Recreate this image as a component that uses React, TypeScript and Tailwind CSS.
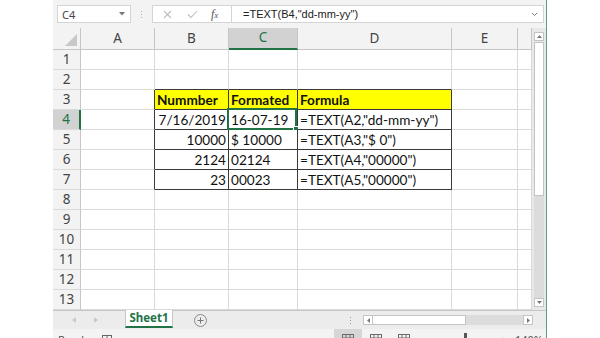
import React from 'react';

type Cell = { t?: string; align?: 'l' | 'r'; bold?: boolean; yellow?: boolean };

const COLS = [
  { key: 'A', w: 'w-[74px]' },
  { key: 'B', w: 'w-[74px]' },
  { key: 'C', w: 'w-[69px]' },
  { key: 'D', w: 'w-[154px]' },
  { key: 'E', w: 'w-[66px]' },
  { key: 'F', w: 'w-[14px]' },
];

const DATA: Record<number, Record<string, Cell>> = {
  3: {
    B: { t: 'Nummber', bold: true, yellow: true },
    C: { t: 'Formated', bold: true, yellow: true },
    D: { t: 'Formula', bold: true, yellow: true },
  },
  4: { B: { t: '7/16/2019', align: 'r' }, C: { t: '16-07-19' }, D: { t: '=TEXT(A2,"dd-mm-yy")' } },
  5: { B: { t: '10000', align: 'r' }, C: { t: '$ 10000' }, D: { t: '=TEXT(A3,"$ 0")' } },
  6: { B: { t: '2124', align: 'r' }, C: { t: '02124' }, D: { t: '=TEXT(A4,"00000")' } },
  7: { B: { t: '23', align: 'r' }, C: { t: '00023' }, D: { t: '=TEXT(A5,"00000")' } },
};

const inTable = (r: number, c: string) => r >= 3 && r <= 7 && (c === 'B' || c === 'C' || c === 'D');

function GridCell({ r, c, w }: { r: number; c: string; w: string }) {
  const cell = DATA[r]?.[c];
  const rightBlack = inTable(r, c) || (c === 'A' && r >= 3 && r <= 7);
  const bottomBlack = inTable(r, c) || (r === 2 && (c === 'B' || c === 'C' || c === 'D'));
  const selected = r === 4 && c === 'C';
  return (
    <div
      className={`${w} relative h-[20px] shrink-0 border-r border-b ${
        rightBlack ? 'border-r-[#3a3a3a]' : 'border-r-[#dadada]'
      } ${bottomBlack ? 'border-b-[#3a3a3a]' : 'border-b-[#dadada]'} ${cell?.yellow ? 'bg-[#ffff00]' : 'bg-white'} ${
        cell?.align === 'r' ? 'text-right pr-[2px]' : 'text-left pl-[2px]'
      } ${cell?.bold ? 'font-bold' : 'font-normal'} overflow-visible whitespace-nowrap text-[13.6px] leading-[20px] text-[#111]`}
      style={{ fontFamily: 'Lato, "Liberation Sans", sans-serif' }}
    >
      {cell?.t}
      {selected && (
        <div className="pointer-events-none absolute -left-[2px] -top-[2px] h-[22px] w-[70px] border-2 border-[#217346]">
          <div className="absolute -bottom-[4px] -right-[4px] h-[6px] w-[6px] border border-white bg-[#217346]" />
        </div>
      )}
    </div>
  );
}

function NormalViewIcon() {
  return (
    <svg width="12" height="10" viewBox="0 0 12 10" fill="none" stroke="#6a6a6a" strokeWidth="1">
      <rect x="0.5" y="0.5" width="11" height="9" />
      <line x1="4" y1="0.5" x2="4" y2="9.5" />
      <line x1="8" y1="0.5" x2="8" y2="9.5" />
      <line x1="0.5" y1="4" x2="11.5" y2="4" />
    </svg>
  );
}

export default function App() {
  const ui = { fontFamily: '"Noto Sans", "Open Sans", sans-serif' };
  const rows = Array.from({ length: 13 }, (_, i) => i + 1);
  return (
    <div className="flex h-[338px] w-[600px] overflow-hidden bg-white" style={ui}>
      <div className="w-[53px] shrink-0 bg-white" />
      <div className="flex h-[338px] w-[494px] shrink-0 flex-col border-r border-r-[#5f9d7a] bg-[#f3f3f3]">
        {/* Formula bar */}
        <div className="flex h-[28px] shrink-0 items-center bg-[#f3f3f3] pl-[4px] pr-[2px]">
          <div className="flex h-[18px] w-[74px] items-center justify-between border border-[#d4d4d4] bg-white pl-[4px] pr-[5px]">
            <span className="text-[11px] leading-none text-[#444]">C4</span>
            <svg width="6" height="4" viewBox="0 0 6 4">
              <path d="M0 0 L6 0 L3 3.5 Z" fill="#777" />
            </svg>
          </div>
          <div className="flex w-[21px] justify-center">
            <div className="flex flex-col gap-[2px]">
              <span className="block h-[1px] w-[1px] bg-[#b0b0b0]" />
              <span className="block h-[1px] w-[1px] bg-[#b0b0b0]" />
              <span className="block h-[1px] w-[1px] bg-[#b0b0b0]" />
            </div>
          </div>
          <div className="flex h-[18px] w-[80px] items-center border border-[#d4d4d4] bg-white pl-[10px]">
            <svg width="9" height="9" viewBox="0 0 9 9" stroke="#bdbdbd" strokeWidth="1.1">
              <path d="M1 1 L8 8 M8 1 L1 8" />
            </svg>
            <svg className="ml-[15px]" width="11" height="9" viewBox="0 0 11 9" fill="none" stroke="#bdbdbd" strokeWidth="1.1">
              <path d="M1 4.5 L4 7.5 L10 1" />
            </svg>
            <span
              className="ml-[13px] text-[12px] italic leading-none text-[#555]"
              style={{ fontFamily: '"Liberation Serif", serif' }}
            >
              f<span className="text-[9px]">x</span>
            </span>
          </div>
          <div className="flex h-[18px] flex-1 items-center justify-between border border-l-0 border-[#d4d4d4] bg-white pl-[11px] pr-[5px]">
            <span
              className="text-[11px] leading-none text-[#222]"
              style={{ fontFamily: '"Liberation Sans", Arial, sans-serif' }}
            >
              =TEXT(B4,"dd-mm-yy")
            </span>
            <svg width="7" height="5" viewBox="0 0 7 5" fill="none" stroke="#777" strokeWidth="1">
              <path d="M1 1 L3.5 3.5 L6 1" />
            </svg>
          </div>
        </div>

        {/* Grid + vertical scrollbar */}
        <div className="flex h-[282px] shrink-0 overflow-hidden">
          <div className="flex w-[479px] shrink-0 flex-col">
            {/* header row */}
            <div className="flex h-[22px] shrink-0">
              <div className="relative h-[22px] w-[28px] shrink-0 border-r border-b border-r-[#c6c6c6] border-b-[#c6c6c6] bg-[#f3f3f3]">
                <svg className="absolute bottom-[3px] right-[3px]" width="12" height="12" viewBox="0 0 12 12">
                  <path d="M12 0 L12 12 L0 12 Z" fill="#c8c8c8" />
                </svg>
              </div>
              {COLS.map((col) => {
                const sel = col.key === 'C';
                return (
                  <div
                    key={col.key}
                    className={`${col.w} flex h-[22px] shrink-0 items-center justify-center border-r ${
                      sel ? 'border-b-2 border-b-[#217346] bg-[#d2d2d2] text-[#217346]' : 'border-b border-b-[#c6c6c6] bg-[#f3f3f3] text-[#444]'
                    } border-r-[#c6c6c6] text-[13.5px] leading-none`}
                  >
                    {col.key === 'F' ? '' : col.key}
                  </div>
                );
              })}
            </div>
            {rows.map((r) => {
              const sel = r === 4;
              return (
                <div key={r} className="flex h-[20px] shrink-0">
                  <div
                    className={`flex h-[20px] w-[28px] shrink-0 items-center justify-center border-b border-b-[#dadada] ${
                      sel ? 'border-r-2 border-r-[#217346] bg-[#d2d2d2] text-[#217346]' : 'border-r border-r-[#c6c6c6] bg-[#f3f3f3] text-[#444]'
                    } text-[13.5px] leading-none`}
                  >
                    {r}
                  </div>
                  {COLS.map((col) => (
                    <GridCell key={col.key} r={r} c={col.key} w={col.w} />
                  ))}
                </div>
              );
            })}
          </div>
          {/* vertical scrollbar */}
          <div className="flex w-[14px] shrink-0 flex-col items-center bg-[#e8e8e8] pt-[4px]">
            <div className="flex h-[9px] w-[10px] items-center justify-center border border-[#c4c4c4] bg-white">
              <svg width="5" height="3" viewBox="0 0 5 3">
                <path d="M0 3 L2.5 0 L5 3 Z" fill="#777" />
              </svg>
            </div>
            <div className="mt-[1px] h-[154px] w-[10px] border border-[#c4c4c4] bg-white" />
            <div className="w-[10px] flex-1 bg-[#dcdcdc]" />
            <div className="mb-[3px] flex h-[9px] w-[10px] items-center justify-center border border-[#c4c4c4] bg-white">
              <svg width="5" height="3" viewBox="0 0 5 3">
                <path d="M0 0 L2.5 3 L5 0 Z" fill="#777" />
              </svg>
            </div>
          </div>
        </div>

        {/* Sheet tabs bar */}
        <div className="flex h-[19px] shrink-0 items-center border-t border-t-[#c6c6c6] bg-[#ececec]">
          <div className="flex w-[72px] items-center pl-[19px]">
            <svg width="4" height="6" viewBox="0 0 4 6">
              <path d="M4 0 L0 3 L4 6 Z" fill="#c9c9c9" />
            </svg>
            <svg className="ml-[18px]" width="4" height="6" viewBox="0 0 4 6">
              <path d="M0 0 L4 3 L0 6 Z" fill="#c9c9c9" />
            </svg>
          </div>
          <div className="-mt-[1px] flex h-[18px] w-[48px] items-center justify-center self-start border-x border-x-[#c6c6c6] border-b-2 border-b-[#217346] bg-white">
            <span className="text-[11.5px] font-bold leading-none text-[#217346]">Sheet1</span>
          </div>
          <div className="ml-[21px] flex h-[13px] w-[13px] items-center justify-center rounded-full border border-[#8a8a8a] text-[11px] leading-none text-[#777]">
            <svg width="7" height="7" viewBox="0 0 7 7" stroke="#777" strokeWidth="1">
              <path d="M3.5 0.5 V6.5 M0.5 3.5 H6.5" />
            </svg>
          </div>
          <div className="ml-[143px] flex flex-col gap-[2px]">
            <span className="block h-[1px] w-[1px] bg-[#999]" />
            <span className="block h-[1px] w-[1px] bg-[#999]" />
            <span className="block h-[1px] w-[1px] bg-[#999]" />
          </div>
          <div className="ml-[12px] flex h-[10px] items-center">
            <div className="flex h-[10px] w-[10px] items-center justify-center border border-[#c4c4c4] bg-white">
              <svg width="3" height="5" viewBox="0 0 3 5">
                <path d="M3 0 L0 2.5 L3 5 Z" fill="#777" />
              </svg>
            </div>
            <div className="h-[10px] w-[93px] border border-l-0 border-[#c4c4c4] bg-white" />
            <div className="h-[10px] w-[57px] bg-[#dcdcdc]" />
            <div className="flex h-[10px] w-[10px] items-center justify-center border border-[#c4c4c4] bg-white">
              <svg width="3" height="5" viewBox="0 0 3 5">
                <path d="M0 0 L3 2.5 L0 5 Z" fill="#777" />
              </svg>
            </div>
          </div>
        </div>

        {/* Status bar */}
        <div className="relative flex h-[22px] shrink-0 items-start bg-[#f3f3f3] pt-[5px]">
          <span className="ml-[5px] text-[11px] leading-none text-[#555]">Ready</span>
          <div className="ml-[12px] mt-[1px]">
            <svg width="10" height="8" viewBox="0 0 10 8" fill="none" stroke="#666" strokeWidth="1">
              <rect x="0.5" y="0.5" width="9" height="7" />
              <line x1="5" y1="0.5" x2="5" y2="7.5" />
            </svg>
          </div>
          <div className="-mt-[5px] ml-[222px] flex h-[22px] w-[28px] items-start justify-center bg-[#d6d6d6] pt-[5px]">
            <NormalViewIcon />
          </div>
          <div className="ml-[8px] mt-[0px]">
            <NormalViewIcon />
          </div>
          <div className="ml-[16px] mt-[0px]">
            <NormalViewIcon />
          </div>
          <div className="ml-[54px] -mt-[1px] h-[12px] w-[3px] bg-[#555]" />
          <span className="ml-[33px] text-[11px] leading-none text-[#555]">+</span>
          <span className="ml-[9px] text-[11px] leading-none text-[#555]">140%</span>
        </div>
      </div>
      <div className="flex-1 bg-white" />
    </div>
  );
}
